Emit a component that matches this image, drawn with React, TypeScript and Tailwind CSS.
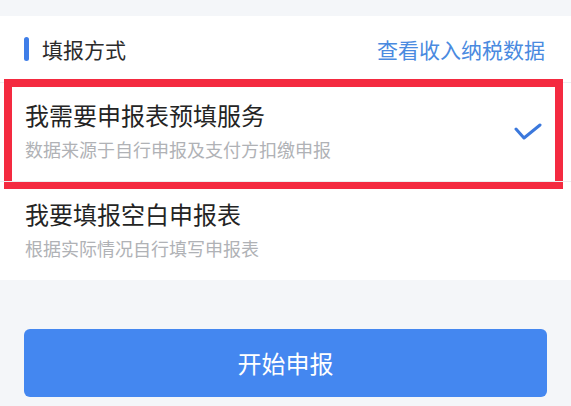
import React from 'react';

const options = [
    {
        id: 'prefill',
        title: '我需要申报表预填服务',
        desc: '数据来源于自行申报及支付方扣缴申报',
        checked: true,
    },
    {
        id: 'blank',
        title: '我要填报空白申报表',
        desc: '根据实际情况自行填写申报表',
        checked: false,
    },
];

const CheckIcon: React.FC = () => (
    <svg width="28" height="18" viewBox="0 0 28 18" fill="none">
        <polyline
            points="2,6 10,15 26,2"
            stroke="#3b78dc"
            strokeWidth="3"
            strokeLinecap="round"
            strokeLinejoin="round"
        />
    </svg>
);

export default function App() {
    return (
        <div
            className="w-[571px] h-[406px] overflow-hidden bg-[#f4f6f9] pt-[16px]"
            style={{ fontFamily: '"Noto Sans CJK SC", "Noto Sans", sans-serif' }}
        >
            <div className="bg-white">
                {/* header */}
                <div className="h-[66px] flex items-center justify-between pl-[24px] pr-[26px]">
                    <div className="flex items-center">
                        <div className="w-[5px] h-[24px] rounded-full bg-[#3f7ee8]" />
                        <span className="ml-[13px] text-[21px] leading-[28px] text-[#2b2b2b]">填报方式</span>
                    </div>
                    <span className="text-[21px] leading-[28px] text-[#4a8ae0]">查看收入纳税数据</span>
                </div>

                {options.map((opt) => (
                    <div
                        key={opt.id}
                        className="relative border-t border-[#eceef1] h-[99px] flex justify-between pl-[25px] pr-[29px]"
                    >
                        <div className="flex flex-col pt-[16px]">
                            <span className="text-[24px] leading-[32px] text-[#242424]">{opt.title}</span>
                            <span className="mt-[6px] text-[18px] leading-[24px] text-[#b0b2b6]">{opt.desc}</span>
                        </div>
                        {opt.checked && (
                            <div className="self-center">
                                <CheckIcon />
                            </div>
                        )}
                        {opt.checked && (
                            <div className="absolute left-[4px] right-[8px] top-[-4px] bottom-[-8px] border-[8px] border-[#f42a40] pointer-events-none" />
                        )}
                    </div>
                ))}
            </div>

            <div className="px-[24px] pt-[49px]">
                <button className="w-[523px] h-[68px] rounded-[6px] bg-[#4487f0] text-white text-[24px] leading-[32px]">
                    开始申报
                </button>
            </div>
        </div>
    );
}
